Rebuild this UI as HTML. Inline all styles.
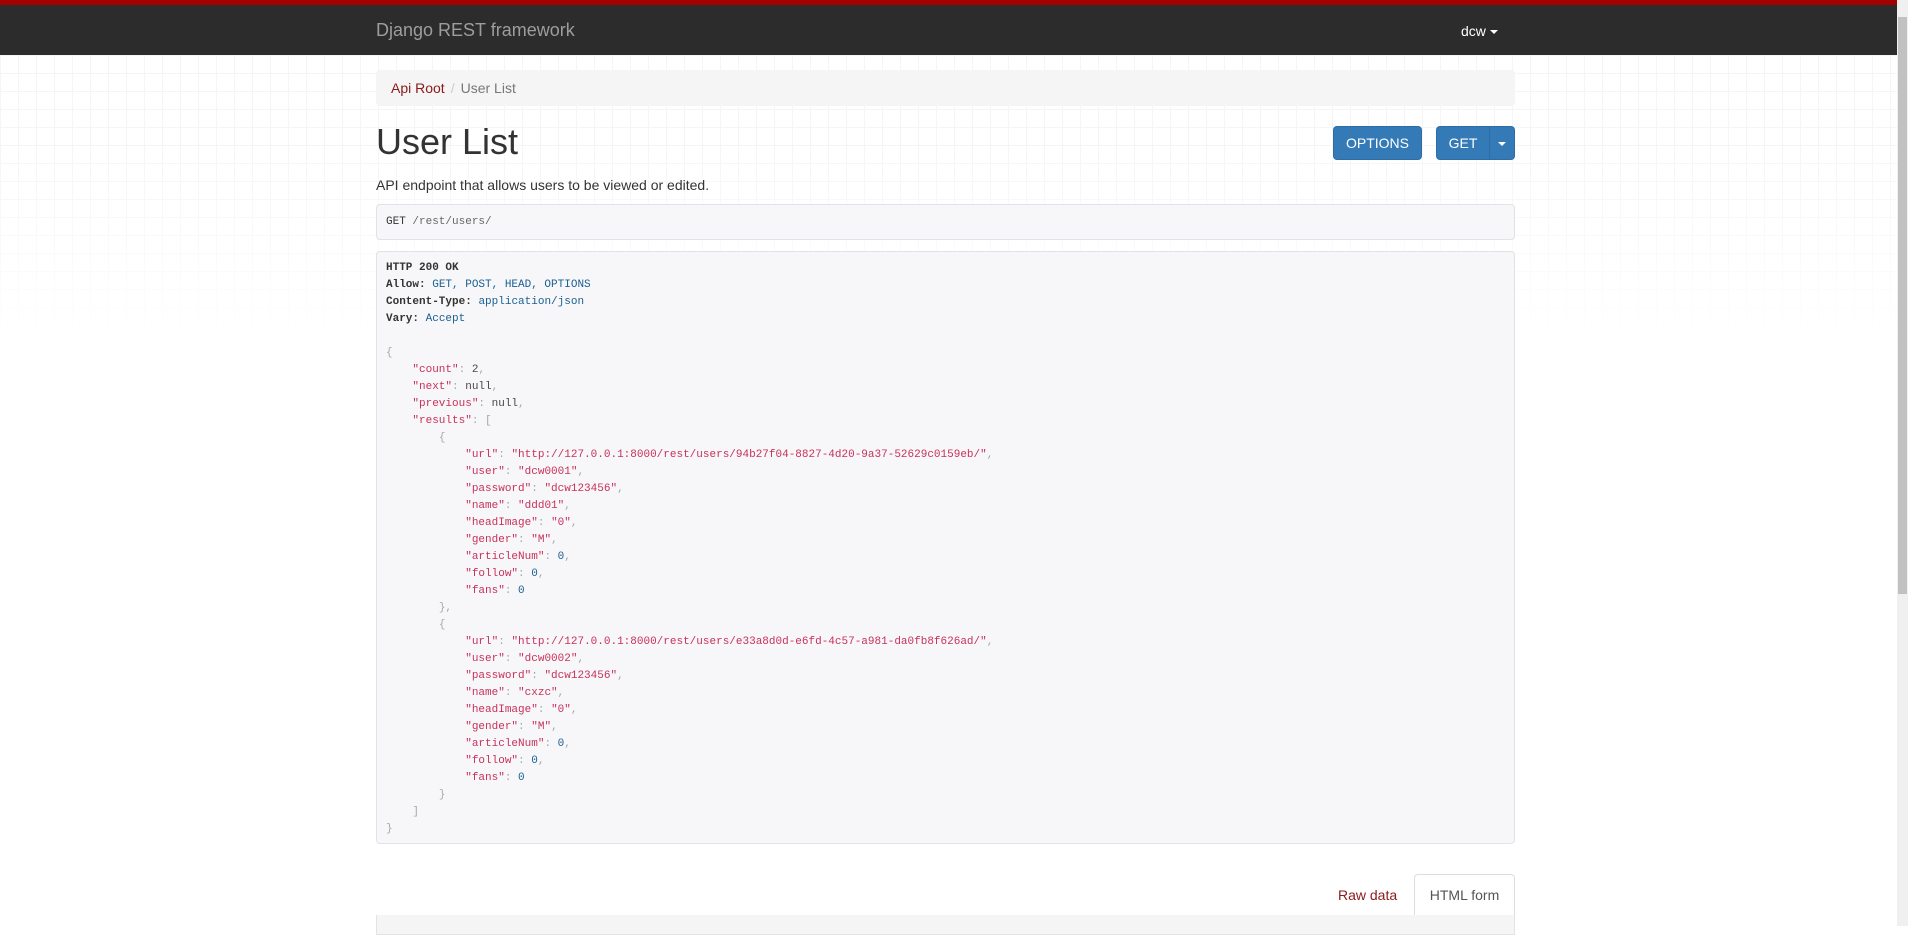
<!DOCTYPE html>
<html><head><meta charset="utf-8"><style>
*{box-sizing:border-box}
body{margin:0;width:1908px;height:926px;overflow:hidden;background:#fff;font-family:"Liberation Sans",Arial,sans-serif;font-size:14px;color:#333;position:relative}
.grid{position:absolute;left:0;top:55px;width:1897px;height:300px;
background-image:linear-gradient(to right,#f5f5f5 1px,transparent 1px),linear-gradient(to bottom,#f5f5f5 1px,transparent 1px);
background-size:18px 18px;-webkit-mask-image:linear-gradient(to bottom,#000 0,#000 30%,transparent 100%);mask-image:linear-gradient(to bottom,#000 0,#000 30%,transparent 100%)}
.red{position:absolute;left:0;top:0;width:1897px;height:5px;background:#a30000}
.nav{position:absolute;left:0;top:5px;width:1897px;height:50px;background:#2c2c2c}
.brand{position:absolute;left:376px;top:15px;font-size:18px;color:#9d9d9d;line-height:20px}
.user{position:absolute;left:1461px;top:16px;font-size:14px;color:#fff;line-height:20px}
.caret{display:inline-block;width:0;height:0;border-top:4px solid;border-left:4px solid transparent;border-right:4px solid transparent;vertical-align:middle;margin-left:4px}
.c{position:absolute;left:376px;width:1139px}
.bc{top:70px;height:36px;background:#f5f5f5;border-radius:4px;padding:8px 15px;line-height:20px}
.bc a{color:#8a1a1a}.bc .s{color:#ccc;padding:0 6px}.bc .act{color:#777}
h1{position:absolute;left:376px;top:122px;margin:0;font-size:36px;font-weight:500;line-height:40px;color:#333}
.btn{position:absolute;top:126px;height:34px;background:#337ab7;border:1px solid #2e6da4;border-radius:4px;color:#fff;font-size:14px;line-height:32px;text-align:center}
.desc{position:absolute;left:376px;top:175px;line-height:20px}
pre{margin:0;font-family:"Liberation Mono",monospace;font-size:11px;background:#f7f7f9;border:1px solid #e1e1e8;border-radius:4px;color:#48484c}
.req{top:204px;height:36px;padding:10px 9px;line-height:15px;color:#333}
.resp{top:251px;height:593px;padding:8px 9px;line-height:17px}
.k{color:#c8315a}.n{color:#195f91}.p{color:#a0aaaa}b{color:#333}
.tabs{top:874px;height:42px;border-bottom:1px solid #ddd}
.raw{position:absolute;left:962px;top:11px;color:#8a1a1a;line-height:20px}
.tab{position:absolute;left:1038px;top:0;width:101px;height:43px;background:#fff;border:1px solid #ddd;border-bottom-color:#fff;border-radius:4px 4px 0 0;color:#555;text-align:center;line-height:40px}
.form{top:915px;height:20px;background:#f5f5f5;border:1px solid #e3e3e3;border-top:none}
.sb{position:absolute;left:1897px;top:0;width:11px;height:926px;background:#f0f0f0}
.th{position:absolute;left:1898px;top:17px;width:9px;height:577px;background:#c1c1c1}
</style></head><body>
<div class="grid"></div>
<div class="red"></div>
<div class="nav"><div class="brand">Django REST framework</div><div class="user">dcw<span class="caret"></span></div></div>
<div class="c bc"><a>Api Root</a><span class="s">/</span><span class="act">User List</span></div>
<h1>User List</h1>
<div class="btn" style="left:1333px;width:89px">OPTIONS</div>
<div class="btn" style="left:1436px;width:54px;border-radius:4px 0 0 4px">GET</div>
<div class="btn" style="left:1489px;width:26px;border-radius:0 4px 4px 0"><span class="caret" style="margin:0"></span></div>
<div class="desc">API endpoint that allows users to be viewed or edited.</div>
<pre class="c req">GET <span style="color:#666">/rest/users/</span></pre>
<pre class="c resp"><b>HTTP 200 OK</b>
<b>Allow:</b> <span class="n">GET, POST, HEAD, OPTIONS</span>
<b>Content-Type:</b> <span class="n">application/json</span>
<b>Vary:</b> <span class="n">Accept</span>

<span class="p">{</span>
    <span class="k">"count"</span><span class="p">:</span> 2<span class="p">,</span>
    <span class="k">"next"</span><span class="p">:</span> null<span class="p">,</span>
    <span class="k">"previous"</span><span class="p">:</span> null<span class="p">,</span>
    <span class="k">"results"</span><span class="p">: [</span>
        <span class="p">{</span>
            <span class="k">"url"</span><span class="p">:</span> <span class="k">"http://127.0.0.1:8000/rest/users/94b27f04-8827-4d20-9a37-52629c0159eb/"</span><span class="p">,</span>
            <span class="k">"user"</span><span class="p">:</span> <span class="k">"dcw0001"</span><span class="p">,</span>
            <span class="k">"password"</span><span class="p">:</span> <span class="k">"dcw123456"</span><span class="p">,</span>
            <span class="k">"name"</span><span class="p">:</span> <span class="k">"ddd01"</span><span class="p">,</span>
            <span class="k">"headImage"</span><span class="p">:</span> <span class="k">"0"</span><span class="p">,</span>
            <span class="k">"gender"</span><span class="p">:</span> <span class="k">"M"</span><span class="p">,</span>
            <span class="k">"articleNum"</span><span class="p">:</span> <span class="n">0</span><span class="p">,</span>
            <span class="k">"follow"</span><span class="p">:</span> <span class="n">0</span><span class="p">,</span>
            <span class="k">"fans"</span><span class="p">:</span> <span class="n">0</span>
        <span class="p">},</span>
        <span class="p">{</span>
            <span class="k">"url"</span><span class="p">:</span> <span class="k">"http://127.0.0.1:8000/rest/users/e33a8d0d-e6fd-4c57-a981-da0fb8f626ad/"</span><span class="p">,</span>
            <span class="k">"user"</span><span class="p">:</span> <span class="k">"dcw0002"</span><span class="p">,</span>
            <span class="k">"password"</span><span class="p">:</span> <span class="k">"dcw123456"</span><span class="p">,</span>
            <span class="k">"name"</span><span class="p">:</span> <span class="k">"cxzc"</span><span class="p">,</span>
            <span class="k">"headImage"</span><span class="p">:</span> <span class="k">"0"</span><span class="p">,</span>
            <span class="k">"gender"</span><span class="p">:</span> <span class="k">"M"</span><span class="p">,</span>
            <span class="k">"articleNum"</span><span class="p">:</span> <span class="n">0</span><span class="p">,</span>
            <span class="k">"follow"</span><span class="p">:</span> <span class="n">0</span><span class="p">,</span>
            <span class="k">"fans"</span><span class="p">:</span> <span class="n">0</span>
        <span class="p">}</span>
    <span class="p">]</span>
<span class="p">}</span></pre>
<div class="c tabs"><span class="raw">Raw data</span><div class="tab">HTML form</div></div>
<div class="c form"></div>
<div class="sb"></div><div class="th"></div>
</body></html>
